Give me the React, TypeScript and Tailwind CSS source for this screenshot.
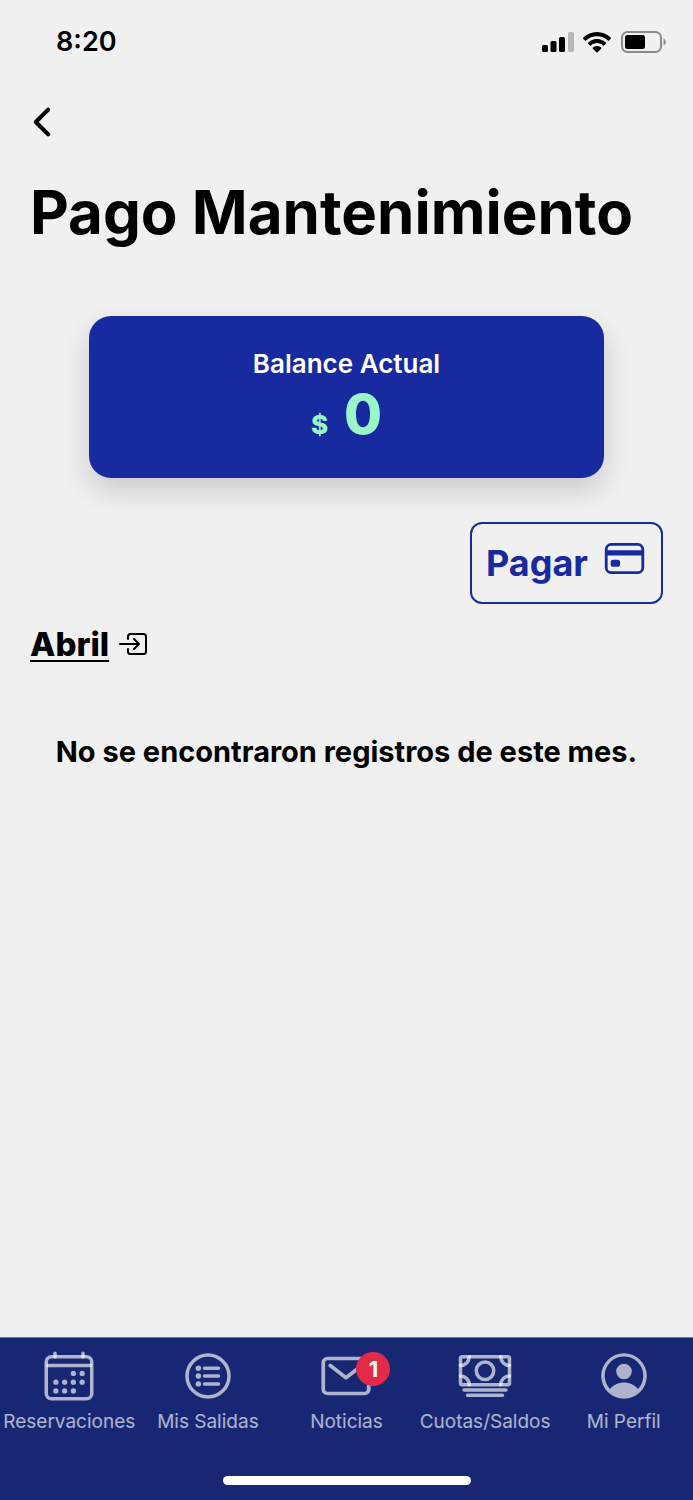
import type { ReactNode } from "react";
import {
  IoCalendarOutline,
  IoCardOutline,
  IoCashOutline,
  IoChevronBack,
  IoEnterOutline,
} from "react-icons/io5";

type Tab = {
  id: string;
  label: string;
  icon: ReactNode;
  badge?: number;
};

const tabs: Tab[] = [
  {
    id: "reservaciones",
    label: "Reservaciones",
    icon: <IoCalendarOutline className="size-14" />,
  },
  { id: "salidas", label: "Mis Salidas", icon: <ListIcon /> },
  { id: "noticias", label: "Noticias", icon: <MailIcon />, badge: 1 },
  {
    id: "cuotas",
    label: "Cuotas/Saldos",
    icon: <IoCashOutline className="size-14" />,
  },
  { id: "perfil", label: "Mi Perfil", icon: <ProfileIcon /> },
];

export default function App() {
  return (
    <div className="flex min-h-screen flex-col bg-[#f0f0f0] font-['Inter',sans-serif] text-black">
      <StatusBar />

      <main className="flex flex-1 flex-col px-[30px]">
        <button type="button" aria-label="Volver" className="-ml-2.5 mt-4 self-start">
          <IoChevronBack className="size-11" />
        </button>

        <h1 className="mt-8 whitespace-nowrap text-[60px] font-bold leading-[72px]">
          Pago Mantenimiento
        </h1>

        <BalanceCard amount={0} />

        <button
          type="button"
          className="mt-11 flex h-[82px] items-center gap-3.5 self-end rounded-xl border-2 border-[#172a9f] px-3.5 text-[#172a9f]"
        >
          <span className="text-4xl font-bold">Pagar</span>
          <IoCardOutline className="mb-2.5 size-[45px]" />
        </button>

        <a href="#abril" className="mt-5 flex items-center gap-2 self-start">
          <span className="text-[33px] font-extrabold leading-10 underline decoration-2 underline-offset-4">
            Abril
          </span>
          <IoEnterOutline className="size-8" />
        </a>

        <p className="mt-[70px] text-center text-[29px] font-bold leading-9">
          No se encontraron registros de este mes.
        </p>
      </main>

      <TabBar />
    </div>
  );
}

function StatusBar() {
  return (
    <header className="flex h-[84px] items-center justify-between pl-14 pr-[27px]">
      <span className="text-[27px] font-semibold">8:20</span>
      <div className="flex items-center gap-[9px]">
        <svg className="h-5 w-8" viewBox="0 0 32 20" fill="currentColor">
          <rect x="0" y="13" width="6" height="7" rx="1.5" />
          <rect x="8.5" y="9" width="6" height="11" rx="1.5" />
          <rect x="17" y="5" width="6" height="15" rx="1.5" />
          <rect x="26" y="0" width="6" height="20" rx="1.5" fill="#b8b8b8" />
        </svg>
        <svg className="h-[21px] w-7" viewBox="0 0 28 21" fill="currentColor">
          <path d="M14 0C8.700 0 3.900 2.100.3 5.500a.9.900 0 0 0 0 1.300l1.600 1.600c.3.300.8.300 1.200 0C6 5.800 9.800 4.200 14 4.200s8 1.600 10.900 4.200c.4.300.9.300 1.200 0l1.600-1.600a.9.900 0 0 0 0-1.300C24.100 2.100 19.300 0 14 0Z" />
          <path d="M14 7c-3.400 0-6.500 1.300-8.800 3.500-.4.300-.4.900 0 1.200l1.700 1.700c.3.300.8.300 1.200 0 1.600-1.400 3.600-2.300 5.900-2.300s4.300.9 5.900 2.300c.4.300.9.300 1.200 0l1.700-1.700c.4-.3.400-.9 0-1.200C20.500 8.300 17.400 7 14 7Z" />
          <path d="M14 14c-1.600 0-3 .6-4.100 1.500-.4.300-.4.800 0 1.200l3.500 3.500c.3.300.8.300 1.200 0l3.500-3.500c.4-.4.400-.9 0-1.200C17 14.600 15.600 14 14 14Z" />
        </svg>
        <svg className="h-[22px] w-[46px]" viewBox="0 0 46 22">
          <rect
            x="2"
            y="1"
            width="39"
            height="20"
            rx="5.5"
            fill="none"
            stroke="#8a8a8a"
            strokeWidth="2"
          />
          <rect x="5" y="4" width="20" height="14" rx="2.5" fill="currentColor" />
          <path d="M43.500 7.500c1.400.6 2.300 2 2.300 3.500s-.9 2.900-2.300 3.500Z" fill="#8a8a8a" />
        </svg>
      </div>
    </header>
  );
}

function BalanceCard({ amount }: { amount: number }) {
  return (
    <section className="mx-[59px] mt-[68px] flex h-[162px] flex-col items-center rounded-[22px] bg-[#172a9f] pt-8 shadow-[0_12px_28px_rgba(0,0,0,0.16)]">
      <h2 className="text-[26px] font-semibold leading-8 text-white">
        Balance Actual
      </h2>
      <p className="flex items-baseline gap-4 font-extrabold text-[#99f6c8]">
        <span className="text-[26px]">$</span>
        <span className="text-[55px] leading-[68px]">{amount}</span>
      </p>
    </section>
  );
}

function TabBar() {
  return (
    <nav className="border-t border-[#6a739f] bg-[#172774] pb-[15px] pt-2.5">
      <ul className="grid grid-cols-5">
        {tabs.map((tab) => (
          <li key={tab.id}>
            <a
              href={`#${tab.id}`}
              className="flex flex-col items-center gap-1.5 text-white/65"
            >
              <span className="relative">
                {tab.icon}
                {tab.badge && (
                  <span className="absolute -right-4 top-1 flex size-[34px] items-center justify-center rounded-full bg-[#e22a48] text-[22px] font-bold text-white">
                    {tab.badge}
                  </span>
                )}
              </span>
              <span className="whitespace-nowrap text-[19px] leading-6">
                {tab.label}
              </span>
            </a>
          </li>
        ))}
      </ul>
      <div className="mx-auto mt-[42px] h-[9px] w-[248px] rounded-full bg-white" />
    </nav>
  );
}

function ListIcon() {
  return (
    <svg
      className="size-14"
      viewBox="0 0 512 512"
      fill="none"
      stroke="currentColor"
      strokeWidth="32"
      strokeLinecap="round"
    >
      <circle cx="256" cy="256" r="192" />
      <path d="M224 184h128M224 256h128M224 328h128" />
      <g fill="currentColor" stroke="none">
        <circle cx="168" cy="184" r="25" />
        <circle cx="168" cy="256" r="25" />
        <circle cx="168" cy="328" r="25" />
      </g>
    </svg>
  );
}

function MailIcon() {
  return (
    <svg
      className="size-14"
      viewBox="0 0 512 512"
      fill="none"
      stroke="currentColor"
      strokeWidth="34"
      strokeLinecap="round"
      strokeLinejoin="round"
    >
      <rect x="48" y="96" width="416" height="320" rx="40" />
      <path d="M112 160l144 112 144-112" />
    </svg>
  );
}

function ProfileIcon() {
  return (
    <svg className="size-14" viewBox="0 0 56 56" fill="currentColor">
      <path
        fillRule="evenodd"
        d="M28 5.200a22.800 22.800 0 1 0 0 45.600 22.800 22.800 0 0 0 0-45.600Zm14 35.800c-3.200-4.100-8.400-6.500-14-6.500s-10.800 2.400-14 6.500a19.300 19.300 0 1 1 28 0Z"
      />
      <circle cx="28" cy="23.5" r="7.8" />
    </svg>
  );
}
